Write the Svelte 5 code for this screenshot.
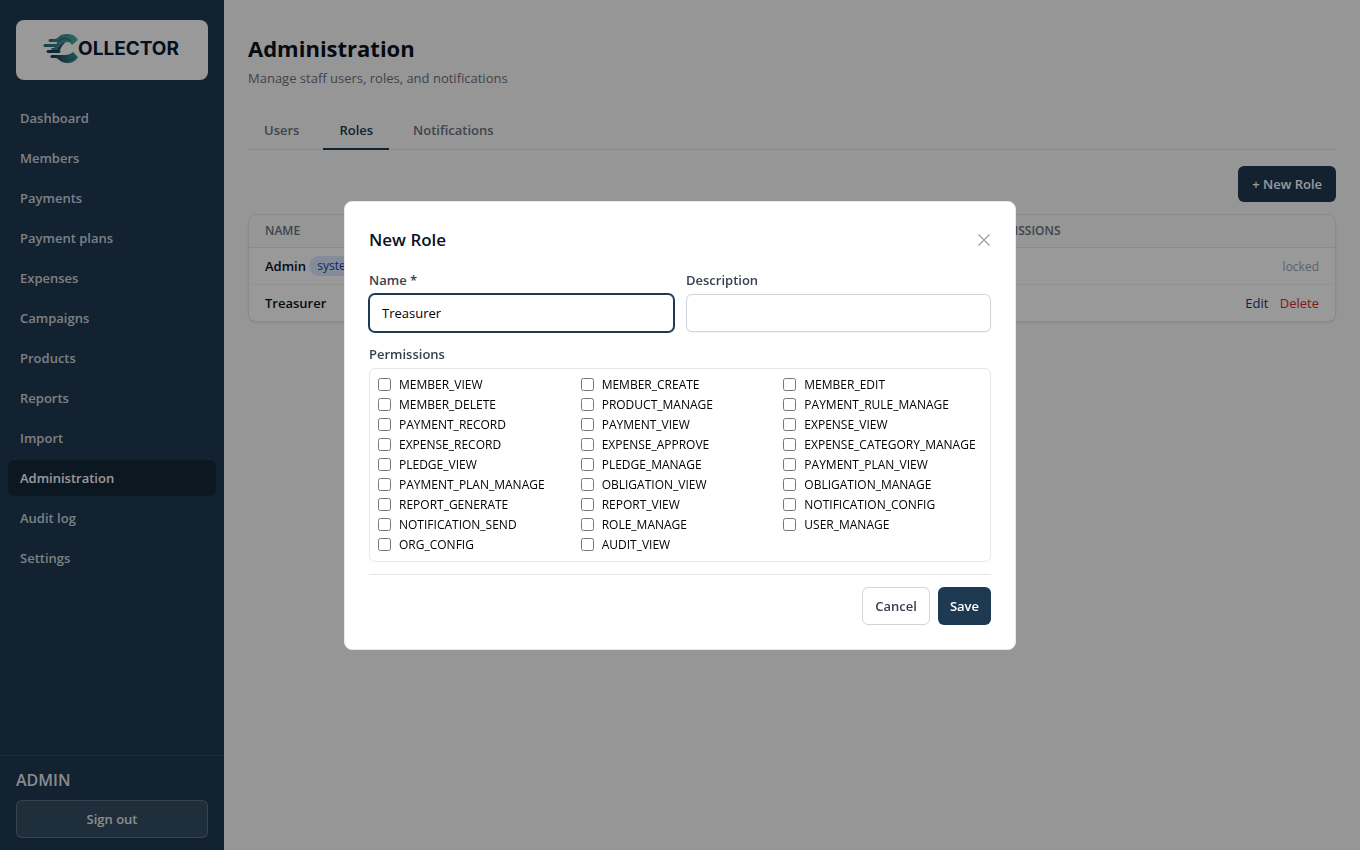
<script lang="ts">
	type Role = { name: string; description: string; permissions: number; system: boolean };

	const navItems = [
		'Dashboard',
		'Members',
		'Payments',
		'Payment plans',
		'Expenses',
		'Campaigns',
		'Products',
		'Reports',
		'Import',
		'Administration',
		'Audit log',
		'Settings',
	];

	const tabs = ['Users', 'Roles', 'Notifications'];

	const allPermissions = [
		'MEMBER_VIEW', 'MEMBER_CREATE', 'MEMBER_EDIT',
		'MEMBER_DELETE', 'PRODUCT_MANAGE', 'PAYMENT_RULE_MANAGE',
		'PAYMENT_RECORD', 'PAYMENT_VIEW', 'EXPENSE_VIEW',
		'EXPENSE_RECORD', 'EXPENSE_APPROVE', 'EXPENSE_CATEGORY_MANAGE',
		'PLEDGE_VIEW', 'PLEDGE_MANAGE', 'PAYMENT_PLAN_VIEW',
		'PAYMENT_PLAN_MANAGE', 'OBLIGATION_VIEW', 'OBLIGATION_MANAGE',
		'REPORT_GENERATE', 'REPORT_VIEW', 'NOTIFICATION_CONFIG',
		'NOTIFICATION_SEND', 'ROLE_MANAGE', 'USER_MANAGE',
		'ORG_CONFIG', 'AUDIT_VIEW',
	];

	const roles: Role[] = [
		{ name: 'Admin', description: '', permissions: 26, system: true },
		{ name: 'Treasurer', description: '', permissions: 8, system: false },
	];

	let activeNav = $state('Administration');
	let activeTab = $state('Roles');
	let showModal = $state(true);
	let name = $state('Treasurer');
	let description = $state('');
	let selected = $state<string[]>([]);

	function openModal() {
		name = '';
		description = '';
		selected = [];
		showModal = true;
	}

	function closeModal() {
		showModal = false;
	}

	function save(e: SubmitEvent) {
		e.preventDefault();
		closeModal();
	}

	function focusOnMount(node: HTMLInputElement) {
		node.focus();
	}
</script>

<div class="app">
	<aside class="sidebar">
		<div class="logo">
			<svg viewBox="0 0 138 32" role="img" aria-label="Collector">
				<defs>
					<linearGradient id="mark-top" x1="0" y1="0" x2="1" y2="0">
						<stop offset="0" stop-color="#2b6478" />
						<stop offset="1" stop-color="#4fb09c" />
					</linearGradient>
					<linearGradient id="mark-bottom" x1="0" y1="0" x2="1" y2="0">
						<stop offset="0" stop-color="#143350" />
						<stop offset="1" stop-color="#3f9690" />
					</linearGradient>
				</defs>
				<path
					fill="url(#mark-top)"
					d="M7 5h5c3 0 4-5 12-5 5 0 9 2 11 6l-6 5c-1-2-3-3-5-3-6 0-6 7-11 8H9c-1 0-1-2 0-2 2 0 2 0 3-1H2c-2 0-2-3 0-3h10c2 0 2-1 4-2H7c-2 0-2-3 0-3z"
				/>
				<path
					fill="#1b4560"
					d="M5 16h7c4 0 5-7 11-8-3 2-5 5-6 8h-1c2 0 2 3 0 3H5c-2 0-2-3 0-3z"
				/>
				<path
					fill="url(#mark-bottom)"
					d="M9 21h13c3 0 6-1 8-3l5 5c-2 4-6 6-11 6-6 0-8-4-11-5H9c-2 0-2-3 0-3z"
				/>
				<path fill="none" stroke="#26607a" stroke-width="1" d="M18 25c6 2 10 1 14-2M14 9c4-5 9-6 14-2" />
				<text x="35" y="21" class="logo-text">OLLECTOR</text>
			</svg>
		</div>

		<nav class="nav">
			{#each navItems as item (item)}
				<a
					href="#{item.toLowerCase().replace(' ', '-')}"
					class="nav-item"
					class:active={item === activeNav}
					onclick={() => (activeNav = item)}>{item}</a
				>
			{/each}
		</nav>

		<div class="account">
			<p class="account-name">ADMIN</p>
			<button type="button" class="sign-out">Sign out</button>
		</div>
	</aside>

	<main class="content">
		<h1>Administration</h1>
		<p class="subtitle">Manage staff users, roles, and notifications</p>

		<div class="tabs" role="tablist">
			{#each tabs as tab (tab)}
				<button
					type="button"
					role="tab"
					class="tab"
					class:active={tab === activeTab}
					aria-selected={tab === activeTab}
					onclick={() => (activeTab = tab)}>{tab}</button
				>
			{/each}
		</div>

		<div class="toolbar">
			<button type="button" class="btn btn-primary" onclick={openModal}>+ New Role</button>
		</div>

		<div class="table-card">
			<table>
				<thead>
					<tr>
						<th class="col-name">Name</th>
						<th class="col-description">Description</th>
						<th>Permissions</th>
						<th aria-label="Actions"></th>
					</tr>
				</thead>
				<tbody>
					{#each roles as role (role.name)}
						<tr>
							<td class="role-name">
								{role.name}
								{#if role.system}<span class="badge">system</span>{/if}
							</td>
							<td>{role.description}</td>
							<td>{role.permissions}</td>
							<td class="actions">
								{#if role.system}
									<span class="locked">locked</span>
								{:else}
									<button type="button" class="link">Edit</button>
									<button type="button" class="link danger">Delete</button>
								{/if}
							</td>
						</tr>
					{/each}
				</tbody>
			</table>
		</div>
	</main>
</div>

{#if showModal}
	<div class="backdrop">
		<div class="modal" role="dialog" aria-modal="true" aria-labelledby="modal-title">
			<header class="modal-header">
				<h2 id="modal-title">New Role</h2>
				<button type="button" class="close" aria-label="Close" onclick={closeModal}>
					<svg viewBox="0 0 14 14" width="14" height="14">
						<path d="M1.5 1.5l11 11M12.5 1.5l-11 11" fill="none" stroke="currentColor" stroke-width="1.3" />
					</svg>
				</button>
			</header>

			<form onsubmit={save}>
				<div class="fields">
					<div class="field">
						<label for="role-name">Name *</label>
						<input id="role-name" type="text" required bind:value={name} use:focusOnMount />
					</div>
					<div class="field">
						<label for="role-description">Description</label>
						<input id="role-description" type="text" bind:value={description} />
					</div>
				</div>

				<fieldset>
					<legend>Permissions</legend>
					<div class="permissions">
						{#each allPermissions as permission (permission)}
							<label class="permission">
								<input type="checkbox" value={permission} bind:group={selected} />
								{permission}
							</label>
						{/each}
					</div>
				</fieldset>

				<footer class="modal-footer">
					<button type="button" class="btn btn-secondary" onclick={closeModal}>Cancel</button>
					<button type="submit" class="btn btn-primary">Save</button>
				</footer>
			</form>
		</div>
	</div>
{/if}

<style>
	:global(body) {
		margin: 0;
		background: #f8fbf8;
		color: #0b1220;
		font-family: 'Open Sans', 'Noto Sans', sans-serif;
		font-size: 13px;
		line-height: 20px;
	}

	.app,
	.app *,
	.backdrop,
	.backdrop * {
		box-sizing: border-box;
	}

	h1,
	h2,
	p {
		margin: 0;
	}

	button,
	input {
		font: inherit;
	}

	button {
		cursor: pointer;
	}

	.app {
		display: flex;
		min-height: 100vh;
	}

	/* Sidebar */
	.sidebar {
		display: flex;
		flex-direction: column;
		flex: none;
		width: 224px;
		background: #1e3a52;
		color: #fff;
	}

	.logo {
		display: flex;
		align-items: center;
		justify-content: center;
		height: 60px;
		margin: 20px 16px;
		border-radius: 8px;
		background: #fff;
	}

	.logo svg {
		width: 138px;
		height: 32px;
		overflow: visible;
	}

	.logo-text {
		font-family: Inter, sans-serif;
		font-size: 19px;
		font-weight: 700;
		fill: #0a1a38;
	}

	.nav {
		display: flex;
		flex: 1;
		flex-direction: column;
		gap: 4px;
		padding: 0 8px;
	}

	.nav-item {
		padding: 8px 12px;
		border-radius: 6px;
		color: rgba(255, 255, 255, 0.8);
		font-weight: 600;
		text-decoration: none;
	}

	.nav-item.active {
		background: #142838;
		color: #fff;
	}

	.account {
		padding: 12px 16px;
		border-top: 1px solid rgba(255, 255, 255, 0.1);
	}

	.account-name {
		margin-bottom: 8px;
		color: rgba(255, 255, 255, 0.9);
		font-size: 16px;
		font-weight: 600;
		line-height: 24px;
	}

	.sign-out {
		width: 100%;
		padding: 8px 12px;
		border: 1px solid rgba(255, 255, 255, 0.2);
		border-radius: 6px;
		background: rgba(255, 255, 255, 0.1);
		color: rgba(255, 255, 255, 0.9);
		font-weight: 600;
	}

	/* Page */
	.content {
		flex: 1;
		min-width: 0;
		padding: 32px 24px;
	}

	h1 {
		font-size: 22px;
		font-weight: 700;
		line-height: 32px;
	}

	.subtitle {
		margin-top: 4px;
		color: #6b7280;
	}

	.tabs {
		display: flex;
		gap: 8px;
		margin-top: 24px;
		border-bottom: 1px solid #e5e7eb;
	}

	.tab {
		margin-bottom: -1px;
		padding: 8px 16px;
		border: 0;
		border-bottom: 2px solid transparent;
		background: none;
		color: #6b7280;
		font-weight: 600;
	}

	.tab.active {
		border-color: #1e3a52;
		color: #1e3a52;
	}

	.toolbar {
		display: flex;
		justify-content: flex-end;
		margin: 16px 0 12px;
	}

	.btn {
		padding: 8px 12px;
		border: 0;
		border-radius: 6px;
		font-weight: 600;
	}

	.toolbar .btn {
		padding: 8px 14px;
	}

	.btn-primary {
		background: #1e3a52;
		color: #fff;
	}

	.btn-secondary {
		border: 1px solid #d1d5db;
		background: #fff;
		color: #374151;
	}

	.table-card {
		overflow: hidden;
		border: 1px solid #e5e7eb;
		border-radius: 8px;
		background: #fff;
		box-shadow: 0 1px 2px rgba(0, 0, 0, 0.08);
	}

	table {
		width: 100%;
		border-collapse: separate;
		border-spacing: 0;
	}

	th {
		padding: 8px 16px;
		border-bottom: 1px solid #e5e7eb;
		background: #f8fbf8;
		color: #6b7280;
		font-size: 12px;
		font-weight: 600;
		line-height: 16px;
		text-align: left;
		text-transform: uppercase;
	}

	.col-name {
		width: 29%;
	}

	.col-description {
		width: 37%;
	}

	td {
		padding: 8px 16px;
	}

	tbody tr + tr td {
		border-top: 1px solid #f3f4f6;
	}

	.role-name {
		font-weight: 600;
	}

	.badge {
		display: inline-block;
		padding: 2px 8px;
		border-radius: 10px;
		background: #dbeafe;
		color: #1e40af;
		font-size: 12px;
		font-weight: 500;
		line-height: 16px;
		vertical-align: top;
	}

	.actions {
		text-align: right;
	}

	.locked {
		color: #9ca3af;
		font-size: 12px;
		line-height: 16px;
	}

	.link {
		padding: 0;
		border: 0;
		background: none;
		color: #1e3a52;
		vertical-align: top;
	}

	.link.danger {
		margin-left: 8px;
		color: #dc2626;
	}

	/* Modal */
	.backdrop {
		position: fixed;
		inset: 0;
		z-index: 50;
		display: flex;
		align-items: center;
		justify-content: center;
		padding: 16px;
		background: rgba(0, 0, 0, 0.4);
	}

	.modal {
		width: 100%;
		max-width: 672px;
		padding: 24px;
		border: 1px solid #e5e7eb;
		border-radius: 8px;
		background: #fff;
	}

	.modal-header {
		display: flex;
		align-items: center;
		justify-content: space-between;
		margin-bottom: 16px;
	}

	h2 {
		font-size: 17px;
		font-weight: 600;
		line-height: 28px;
	}

	.close {
		display: flex;
		padding: 0;
		border: 0;
		background: none;
		color: #9ca3af;
	}

	.fields {
		display: grid;
		grid-template-columns: 1fr 1fr;
		gap: 12px;
	}

	.field label,
	legend {
		display: block;
		margin-bottom: 4px;
		padding: 0;
		color: #374151;
		font-weight: 600;
	}

	.field input {
		display: block;
		width: 100%;
		padding: 8px 12px;
		border: 1px solid #d1d5db;
		border-radius: 6px;
		background: #fff;
		box-shadow: 0 1px 2px rgba(0, 0, 0, 0.05);
		color: #000;
		line-height: 20px;
	}

	.field input:focus {
		border-color: #1e3a52;
		outline: none;
		box-shadow: 0 0 0 1px #1e3a52;
	}

	fieldset {
		margin: 12px 0 0;
		padding: 0;
		border: 0;
	}

	.permissions {
		display: grid;
		grid-template-columns: repeat(3, 1fr);
		gap: 4px;
		padding: 8px;
		border: 1px solid #e5e7eb;
		border-radius: 6px;
	}

	.permission {
		display: flex;
		align-items: center;
		gap: 8px;
		color: #000;
		font-size: 12px;
		line-height: 16px;
	}

	.permission input {
		width: 13px;
		height: 13px;
		margin: 0;
	}

	.modal-footer {
		display: flex;
		justify-content: flex-end;
		gap: 8px;
		margin-top: 12px;
		padding-top: 12px;
		border-top: 1px solid #e5e7eb;
	}
</style>
